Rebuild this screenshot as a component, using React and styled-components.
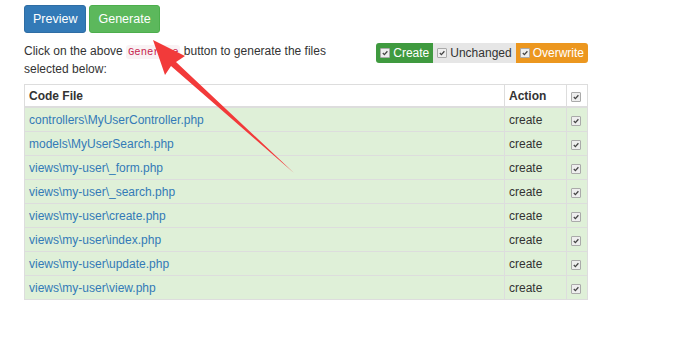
import React from "react";
import styled, { createGlobalStyle } from "styled-components";

const Global = createGlobalStyle`
  html, body { margin: 0; padding: 0; background: #fff; }
  body { font-family: "Liberation Sans", Arial, sans-serif; font-size: 12px; color: #333; }
`;

const Page = styled.div`
  position: relative;
  padding: 5px 88px 0 24px;
  width: 564px;
`;

const Toolbar = styled.div`
  display: flex;
  gap: 3px;
`;

const Button = styled.button`
  font-family: "Liberation Sans", Arial, sans-serif;
  font-size: 12.5px;
  color: #fff;
  border: 1px solid ${(p) => p.$border};
  background: ${(p) => p.$bg};
  border-radius: 3px;
  height: 28px;
  padding: 0 8px;
  cursor: pointer;
`;

const InfoRow = styled.div`
  display: flex;
  justify-content: space-between;
  align-items: flex-start;
  margin-top: 8px;
`;

const Info = styled.p`
  margin: 2px 0 0;
  width: 320px;
  line-height: 17px;
`;

const Code = styled.code`
  font-family: "Liberation Mono", "DejaVu Sans Mono", monospace;
  font-size: 10.5px;
  color: #c7254e;
  background: #f9f2f4;
  border-radius: 3px;
  padding: 1px 2px;
`;

const Legend = styled.div`
  display: flex;
  margin-top: 2px;
  border-radius: 3px;
  overflow: hidden;
`;

const LegendItem = styled.label`
  display: flex;
  align-items: center;
  gap: 3px;
  height: 20px;
  padding: 0 4px 0 4px;
  background: ${(p) => p.$bg};
  color: ${(p) => p.$color};
  font-size: 12px;
`;

const Box = styled.span`
  display: inline-flex;
  align-items: center;
  justify-content: center;
  width: 8px;
  height: 8px;
  border: 1px solid #aaa;
  background: #eee;
  border-radius: 1px;
  svg { display: block; }
`;

const Table = styled.table`
  margin-top: 6px;
  width: 564px;
  border-collapse: collapse;
  border: 1px solid #ddd;
`;

const Th = styled.th`
  text-align: left;
  font-weight: bold;
  height: 21px;
  padding: 0 4px;
  border: 1px solid #ddd;
  background: #fff;
  border-bottom-width: 2px;
  color: #333;
`;

const Td = styled.td`
  height: 23px;
  padding: 0 4px;
  border: 1px solid #ddd;
  background: #dff0d8;
`;

const Link = styled.a`
  color: #337ab7;
  text-decoration: none;
`;

const Arrow = styled.svg`
  position: absolute;
  left: 0;
  top: 0;
  pointer-events: none;
`;

const Check = () => (
  <Box>
    <svg width="6" height="6" viewBox="0 0 6 6">
      <path d="M0.8 3 L2.4 4.6 L5.4 1.2" stroke="#444" strokeWidth="1.3" fill="none" />
    </svg>
  </Box>
);

const files = [
  "controllers\\MyUserController.php",
  "models\\MyUserSearch.php",
  "views\\my-user\\_form.php",
  "views\\my-user\\_search.php",
  "views\\my-user\\create.php",
  "views\\my-user\\index.php",
  "views\\my-user\\update.php",
  "views\\my-user\\view.php",
];

export default function App() {
  return (
    <>
      <Global />
      <Page>
        <Toolbar>
          <Button $bg="#337ab7" $border="#2e6da4">Preview</Button>
          <Button $bg="#5cb85c" $border="#4cae4c">Generate</Button>
        </Toolbar>
        <InfoRow>
          <Info>
            Click on the above <Code>Generate</Code> button to generate the files selected below:
          </Info>
          <Legend>
            <LegendItem $bg="#3f9a3f" $color="#fff"><Check />Create</LegendItem>
            <LegendItem $bg="#e6e6e6" $color="#333"><Check />Unchanged</LegendItem>
            <LegendItem $bg="#ec971f" $color="#fff"><Check />Overwrite</LegendItem>
          </Legend>
        </InfoRow>
        <Table>
          <colgroup>
            <col />
            <col style={{ width: 62 }} />
            <col style={{ width: 21 }} />
          </colgroup>
          <thead>
            <tr>
              <Th>Code File</Th>
              <Th>Action</Th>
              <Th><Check /></Th>
            </tr>
          </thead>
          <tbody>
            {files.map((f) => (
              <tr key={f}>
                <Td><Link href="#">{f}</Link></Td>
                <Td>create</Td>
                <Td><Check /></Td>
              </tr>
            ))}
          </tbody>
        </Table>
        <Arrow width="676" height="337" viewBox="0 0 676 337">
          <path
            d="M153 40 L185 56 L176 62 L294 173 L171 66 L165 75 Z"
            fill="#f23a3a"
          />
        </Arrow>
      </Page>
    </>
  );
}
